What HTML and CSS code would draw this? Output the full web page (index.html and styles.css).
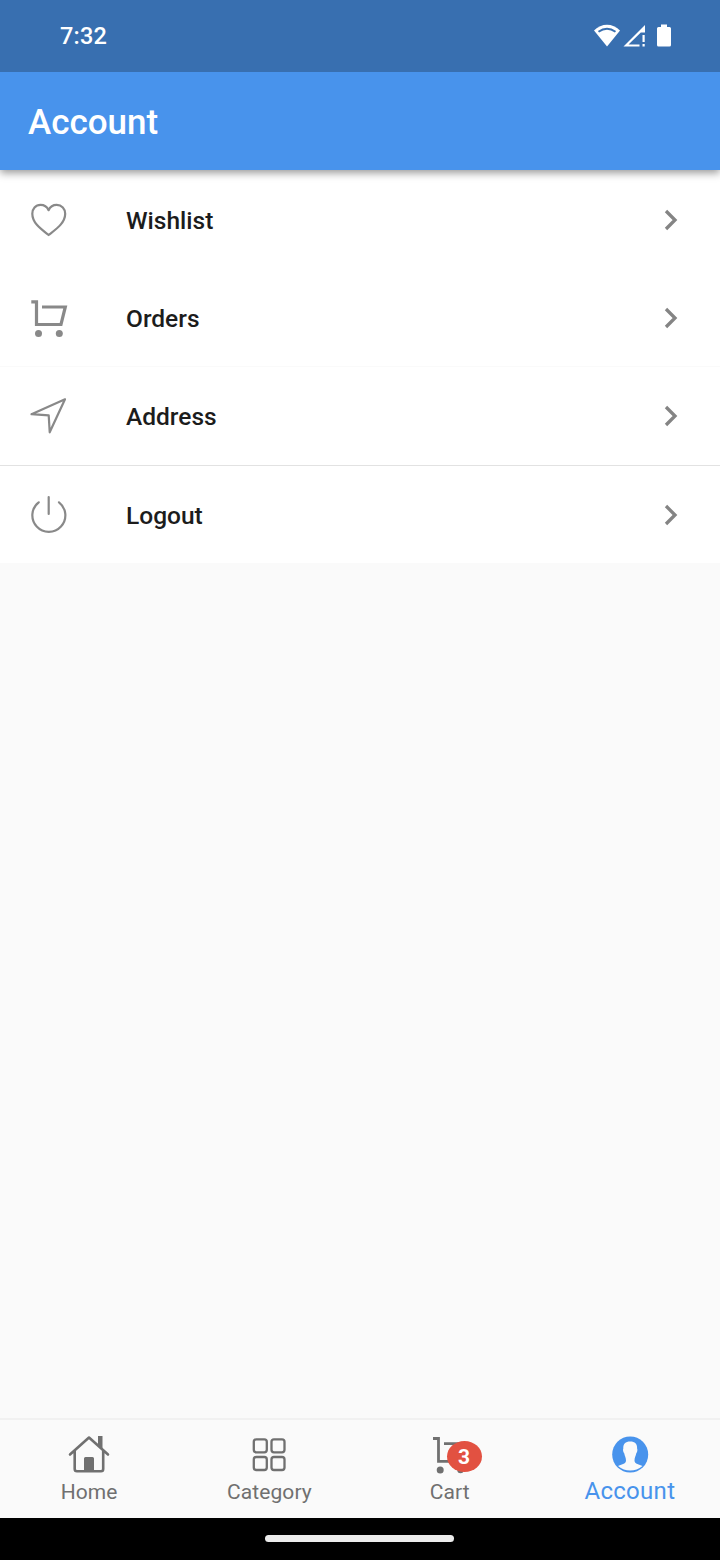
FILE: index.html
```html
<!DOCTYPE html>
<html lang="en">
<head>
  <meta charset="UTF-8" />
  <meta name="viewport" content="width=device-width, initial-scale=1.0"/>
  <title>Account</title>
  <link rel="stylesheet" href="styles.css">
</head>
<body>
  <div class="status-bar">
    <span class="time">7:32</span>
    <svg class="status-icons" width="80" height="26" viewBox="0 0 80 26" fill="#fff">
      <path d="M1 7.500C8.500-.2 19.500-.2 27 7.500L14 23.500Z"/>
      <path d="M5.500 8.800Q14 2.800 22.500 8.800" fill="none" stroke="#386fb0" stroke-width="2"/>
      <path d="M52 2V9.500H47.800L35.500 21.500H46.500V23.500H30.500Z"/>
      <path d="M49.500 12H51.700V19H49.500ZM49.500 21H51.700V23.500H49.500Z"/>
      <path d="M68 1.500h6v2.500h2.500q1.500 0 1.500 1.500v16.500q0 1.500-1.500 1.500h-11q-1.500 0-1.500-1.500v-16.500q0-1.500 1.500-1.500h2.500z"/>
    </svg>
  </div>

  <header class="app-bar">
    <h1>Account</h1>
  </header>

  <main class="content">
    <ul class="menu">
      <li class="menu-item">
        <svg class="icon" viewBox="0 0 42 42">
          <path d="M20.600 37C13 31 4.300 25 4.300 15.700C4.300 11 7.500 6.900 12.500 6.900C16 6.900 19 8.700 20.600 12.200C22.200 8.700 25.200 6.900 28.700 6.900C33.700 6.900 37.200 11 37.200 15.700C37.200 25 28.200 31 20.600 37Z"/>
        </svg>
        <span class="label">Wishlist</span>
        <svg class="chevron" viewBox="0 0 14 22"><path d="M2 2l9 9-9 9"/></svg>
      </li>
      <li class="menu-item">
        <svg class="icon cart" viewBox="0 0 42 42">
          <path d="M3.300 5.800H8.500V28.500H33L37.300 11H14"/>
          <circle cx="10.500" cy="37.500" r="3.500"/>
          <circle cx="31.300" cy="37.500" r="3.500"/>
        </svg>
        <span class="label">Orders</span>
        <svg class="chevron" viewBox="0 0 14 22"><path d="M2 2l9 9-9 9"/></svg>
      </li>
      <li class="menu-item tall">
        <svg class="icon" viewBox="0 0 42 42">
          <path d="M37 5.300L3.500 20.200L20.700 21.300L21.700 38.300Z"/>
        </svg>
        <span class="label">Address</span>
        <svg class="chevron" viewBox="0 0 14 22"><path d="M2 2l9 9-9 9"/></svg>
      </li>
      <li class="menu-item divided">
        <svg class="icon" viewBox="0 0 42 42">
          <path d="M10.700 9.300A16.500 16.500 0 1 0 31 9.300M20.700 4V21"/>
        </svg>
        <span class="label">Logout</span>
        <svg class="chevron" viewBox="0 0 14 22"><path d="M2 2l9 9-9 9"/></svg>
      </li>
    </ul>
  </main>

  <nav class="tab-bar">
    <a class="tab">
      <svg class="tab-icon" viewBox="0 0 42 42">
        <path d="M2 21.500L21 4.500L40 21.500M6.700 18V36Q6.700 38.200 9 38.200H33Q35.200 38.200 35.200 36V18" fill="none" stroke="#707070" stroke-width="2.600" stroke-linecap="round" stroke-linejoin="round"/>
        <path d="M30 3h4.500v14l-4.500-4zM16 38V25.500q0-1.500 1.500-1.500h7q1.500 0 1.500 1.500V38z" fill="#707070"/>
      </svg>
      <span>Home</span>
    </a>
    <a class="tab">
      <svg class="tab-icon" viewBox="0 0 42 42" fill="none" stroke="#707070" stroke-width="2.300">
        <rect x="5.800" y="6.300" width="13" height="13" rx="2.500"/>
        <rect x="23.500" y="6.300" width="13" height="13" rx="2.500"/>
        <rect x="5.800" y="24" width="13" height="13" rx="2.500"/>
        <rect x="23.500" y="24" width="13" height="13" rx="2.500"/>
      </svg>
      <span>Category</span>
    </a>
    <a class="tab">
      <div class="badge-wrap">
        <svg class="tab-icon cart" viewBox="0 0 42 42">
          <path d="M4 5.500H9.500V28.300H33L37.700 10.700H15"/>
          <circle cx="11.200" cy="37" r="3.500"/>
          <circle cx="31.500" cy="37" r="3.200"/>
        </svg>
        <span class="badge">3</span>
      </div>
      <span>Cart</span>
    </a>
    <a class="tab active">
      <svg class="tab-icon" viewBox="0 0 42 42">
        <circle cx="21.200" cy="21.500" r="18" fill="#4893ec"/>
        <path d="M21.200 8.500C16.500 8.500 14 11 14.300 15.500C13.500 17 14.500 19.500 15.300 20.500C15.600 23 17 24.500 17 27.500C17 31 12 31.500 9 33Q14.500 37.500 21.200 37.500Q28 37.500 33.500 33C30.500 31.500 25.500 31 25.500 27.500C25.500 24.500 26.800 23 27.200 20.500C28 19.500 28.900 17 28.100 15.500C28.400 11 25.900 8.500 21.200 8.500Z" fill="#fafafa"/>
      </svg>
      <span>Account</span>
    </a>
  </nav>

  <div class="gesture-bar"><div class="handle"></div></div>
</body>
</html>
```

FILE: styles.css
```css
* {
  margin: 0;
  padding: 0;
  box-sizing: border-box;
}

body {
  height: 1560px;
  display: flex;
  flex-direction: column;
  background: #fafafa;
  font-family: Roboto, "Liberation Sans", sans-serif;
  color: #1c1c1c;
}

.status-bar {
  height: 72px;
  flex: none;
  padding: 0 47px 0 60px;
  display: flex;
  align-items: center;
  justify-content: space-between;
  background: #386fb0;
  color: #fff;
  z-index: 2;
}

.time {
  font-size: 23.5px;
  font-weight: 500;
  letter-spacing: 0.2px;
}

.app-bar {
  height: 98px;
  flex: none;
  padding: 3px 28px 0;
  display: flex;
  align-items: center;
  background: #4893ec;
  color: #fff;
  box-shadow: 0 3px 8px rgba(0, 0, 0, 0.4);
  z-index: 1;
}

h1 {
  font-size: 35px;
  font-weight: 500;
}

.content {
  flex: 1;
}

.menu {
  list-style: none;
  background: #fff;
}

.menu-item {
  height: 98px;
  padding: 0 42px 0 28px;
  display: flex;
  align-items: center;
}

.tall {
  height: 99px;
  padding-bottom: 3px;
  border-top: 1px solid #fafafa;
}

.divided {
  padding-bottom: 2px;
  border-top: 1px solid #e2e2e2;
}

.icon {
  width: 42px;
  height: 42px;
  fill: none;
  stroke: #898989;
  stroke-width: 2.2;
  stroke-linecap: round;
  stroke-linejoin: round;
}

.label {
  flex: 1;
  padding-top: 3px;
  margin-left: 56px;
  font-size: 24.5px;
  font-weight: 500;
}

.chevron {
  width: 14px;
  height: 22px;
  margin-top: 2px;
  fill: none;
  stroke: #848484;
  stroke-width: 3.3;
}

.cart path {
  fill: none;
  stroke: #898989;
  stroke-width: 3.2;
  stroke-linecap: butt;
  stroke-linejoin: miter;
}

.cart circle {
  fill: #898989;
  stroke: none;
}

.tab-bar {
  height: 100px;
  flex: none;
  display: flex;
  border-top: 2px solid #f1f1f1;
  background: #fafafa;
}

.tab {
  flex: 1;
  padding: 13px 2px 0 0;
  display: flex;
  flex-direction: column;
  align-items: center;
  font-size: 21px;
  line-height: 34px;
  letter-spacing: 0.1px;
  color: #707070;
}

.tab-icon {
  display: block;
  width: 42px;
  height: 42px;
}

.tab .cart path {
  stroke: #707070;
  stroke-width: 2.8;
}

.tab .cart circle {
  fill: #707070;
}

.active {
  padding-right: 1px;
  font-size: 24px;
  line-height: 32px;
  letter-spacing: 0.3px;
  color: #4893ec;
}

.badge-wrap {
  position: relative;
}

.badge {
  position: absolute;
  left: 18px;
  top: 8px;
  width: 35px;
  height: 31px;
  border-radius: 50%;
  background: #e25141;
  color: #fff;
  font-size: 21px;
  font-weight: 700;
  line-height: 32px;
  text-align: center;
}

.gesture-bar {
  height: 42px;
  flex: none;
  padding-top: 17px;
  background: #000;
}

.handle {
  width: 189px;
  height: 7px;
  margin-left: 265px;
  border-radius: 4px;
  background: #ececec;
}
```
